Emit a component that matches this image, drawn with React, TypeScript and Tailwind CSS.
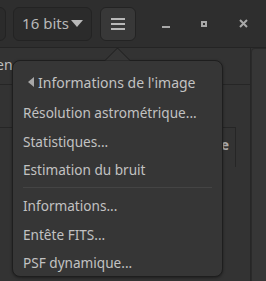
import React from "react";

const font = { fontFamily: '"Noto Sans", "Open Sans", sans-serif' };

export default function App() {
  const items1 = ["Résolution astrométrique...", "Statistiques...", "Estimation du bruit"];
  const items2 = ["Informations...", "Entête FITS...", "PSF dynamique..."];
  return (
    <div className="relative w-[266px] h-[281px] overflow-hidden bg-[#333333] text-[#c4c4c4]" style={font}>
      {/* header */}
      <div className="flex items-center h-[48px] bg-[#2e2e2e] border-b border-[#242424]">
        <div className="ml-[-30px] w-[36px] h-[34px] rounded-[6px] border border-[#232323] bg-[#2b2b2b]" />
        <div className="ml-[7px] flex items-center justify-center gap-[2px] w-[79px] h-[34px] rounded-[6px] border border-[#232323] bg-[#2b2b2b] text-[15px] text-[#b8b8b8]">
          <span>16 bits</span>
          <svg width="12" height="7" viewBox="0 0 12 7"><path d="M0 0h12L6 7z" fill="#b8b8b8" /></svg>
        </div>
        <div className="ml-[8px] flex flex-col items-center justify-center gap-[3px] w-[36px] h-[34px] rounded-[6px] border border-[#232323] bg-[#383838]">
          <div className="w-[14px] h-[2px] bg-[#b8b8b8]" />
          <div className="w-[14px] h-[2px] bg-[#b8b8b8]" />
          <div className="w-[14px] h-[2px] bg-[#b8b8b8]" />
        </div>
        <div className="flex-1 flex items-center justify-around pl-[10px] pr-[2px]">
          <div className="w-[8px] h-[2px] mt-[6px] bg-[#a8a8a8]" />
          <div className="w-[6px] h-[6px] border-2 border-[#a8a8a8]" />
          <svg width="9" height="9" viewBox="0 0 9 9"><path d="M1 1l7 7M8 1L1 8" stroke="#a8a8a8" strokeWidth="2" /></svg>
        </div>
      </div>
      {/* body */}
      <div className="flex h-[233px]">
        <div className="flex-1 flex flex-col border-r border-[#262626]">
          <div className="h-[37px] border-b border-[#262626] flex items-center text-[14px] text-[#bdbdbd]">
            <span className="ml-[-4px] mb-[4px]">en</span>
          </div>
          <div className="flex-1 pt-[42px] flex">
            <div className="flex-1 h-[40px] border-t border-r border-[#262626] mr-[14px] flex justify-end pr-[6px] pt-[6px] text-[14px] font-bold text-[#aaaaaa]">e</div>
          </div>
        </div>
        <div className="w-[15px] bg-[#363636] rounded-tl-[4px] border-l border-t border-[#2a2a2a]" />
      </div>
      {/* popover */}
      <div className="absolute left-[12px] top-[48px] w-[211px]">
        <svg className="absolute left-[93px] top-0" width="25" height="13" viewBox="0 0 25 13">
          <path d="M0 12.5L12.5 0L25 12.5" fill="#363636" stroke="#1e1e1e" strokeWidth="1" />
        </svg>
        <div className="mt-[12px] h-[217px] rounded-[8px] border border-[#1e1e1e] bg-[#363636] shadow-[0_1px_3px_rgba(0,0,0,0.4)] text-[13.6px] text-[#c2c2c2] pt-[9px] px-[10px]">
          <div className="h-[24px] flex items-center text-[14px]">
            <svg className="ml-[5px] mr-[4px]" width="6" height="10" viewBox="0 0 6 10"><path d="M6 0v10L0 5z" fill="#a8a8a8" /></svg>
            <span>Informations de l'image</span>
          </div>
          <div className="mt-[5px]">
            {items1.map((t) => (
              <div key={t} className="h-[28.5px] flex items-center">{t}</div>
            ))}
          </div>
          <div className="mt-[2.5px] mb-[4px] h-px bg-[#444444]" />
          <div>
            {items2.map((t) => (
              <div key={t} className="h-[28.5px] flex items-center">{t}</div>
            ))}
          </div>
        </div>
      </div>
    </div>
  );
}
